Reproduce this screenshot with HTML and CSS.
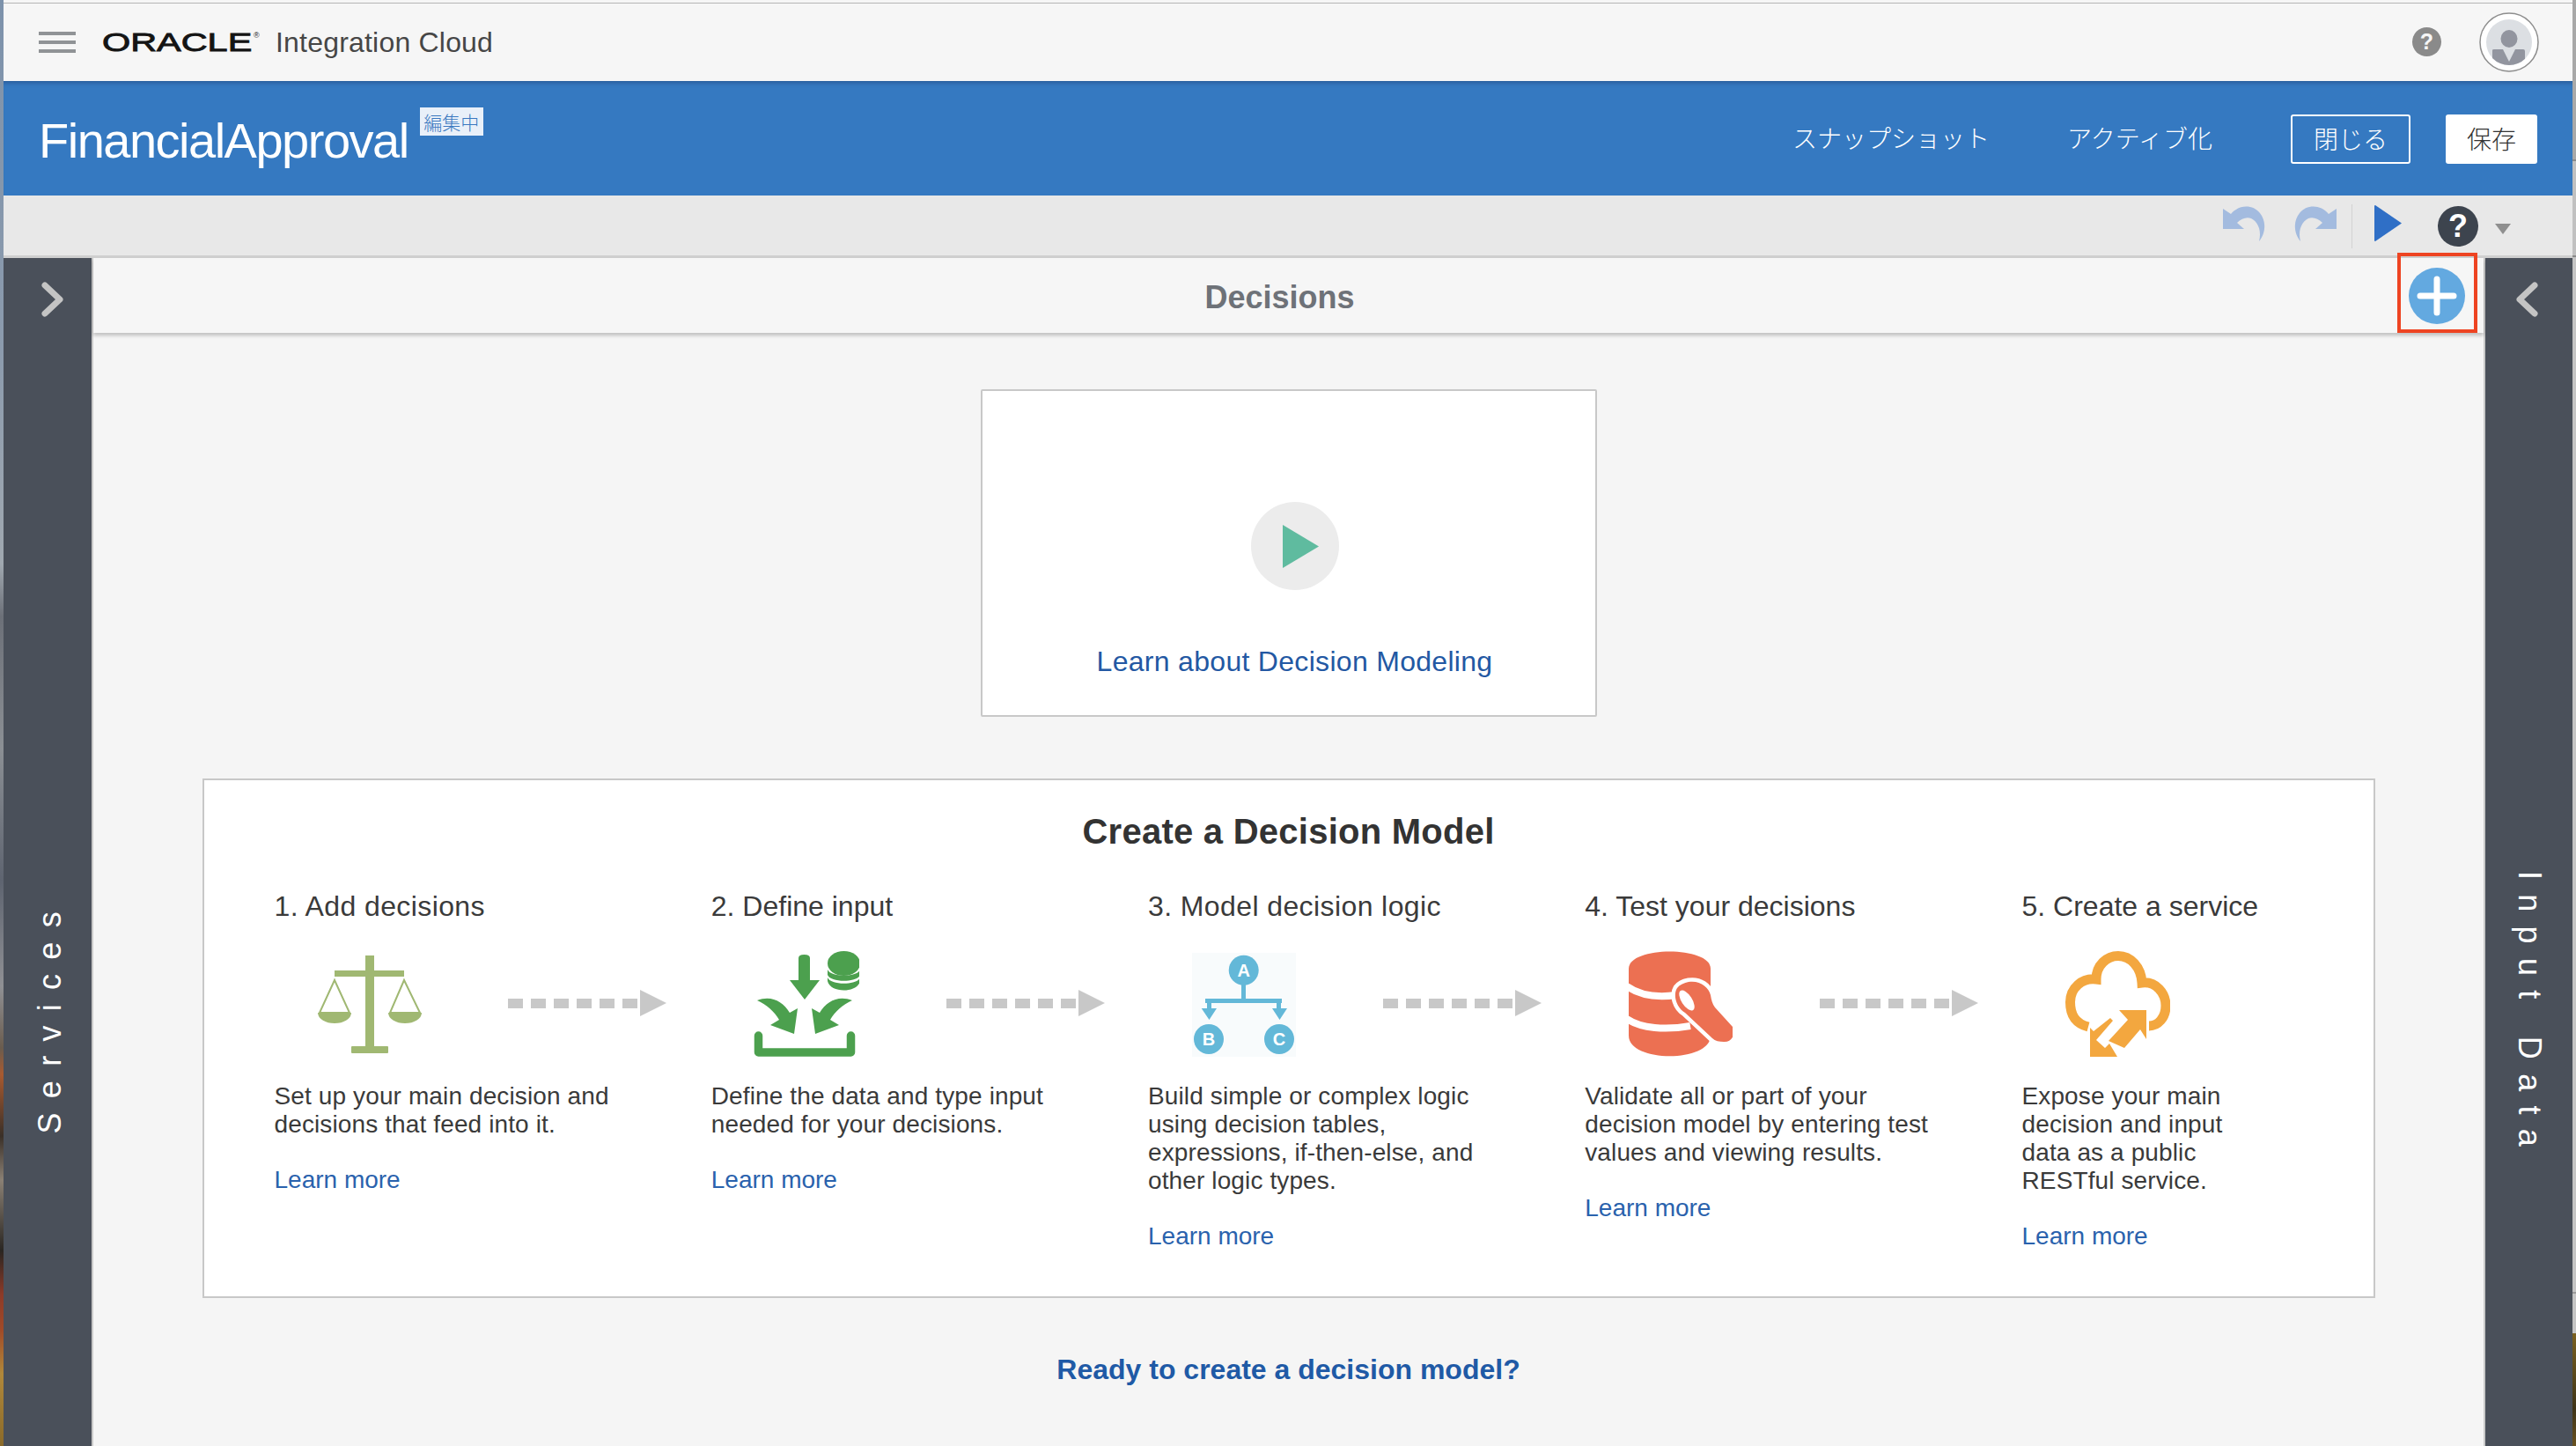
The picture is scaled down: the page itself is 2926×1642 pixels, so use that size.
FILE: index.html
```html
<!DOCTYPE html>
<html lang="en">
<head>
<meta charset="utf-8">
<title>FinancialApproval - Decisions</title>
<link rel="stylesheet" href="styles.css">
</head>
<body>
<div class="strip strip-left"></div>
<div class="app">
  <header class="topbar">
    <div class="burger"><i></i><i></i><i></i></div>
    <div class="logo"><span class="logo-word">ORACLE</span><sup class="logo-reg">®</sup></div>
    <div class="product">Integration Cloud</div>
    <div class="topbar-right">
      <span class="help-small">?</span>
      <svg class="avatar" viewBox="0 0 68 68">
        <defs><clipPath id="av"><circle cx="34" cy="34" r="26"/></clipPath></defs>
        <circle cx="34" cy="34" r="33" fill="#fff" stroke="#8e8e8e" stroke-width="1.5"/>
        <circle cx="34" cy="34" r="26" fill="#dcdfe3"/>
        <g clip-path="url(#av)">
          <ellipse cx="34" cy="30" rx="9.5" ry="10" fill="#92959f"/>
          <path d="M15 43 Q15 42 17 42 H27 L34 56 L41 42 H50 Q52 42 52 44 V64 H15 Z" fill="#92959f"/>
        </g>
      </svg>
    </div>
  </header>

  <section class="titlebar">
    <h1 class="app-name">FinancialApproval</h1>
    <span class="badge">編集中</span>
    <nav class="actions">
      <a class="action act-snap">スナップショット</a>
      <a class="action act-activate">アクティブ化</a>
      <button class="btn btn-outline">閉じる</button>
      <button class="btn btn-solid">保存</button>
    </nav>
  </section>

  <section class="toolbar">
    <svg class="tool-undo" viewBox="0 0 48 40"><path d="M0 3 L0 26 L24 26 L16 19 C21 14 27 12 32 14 C40 18 44 28 41 40 C48 32 50 18 42 8 C34 -2 18 -2 9 9 Z" fill="#a3bbdf"/></svg>
    <svg class="tool-redo" viewBox="0 0 48 40"><path d="M48 3 L48 26 L24 26 L32 19 C27 14 21 12 16 14 C8 18 4 28 7 40 C0 32 -2 18 6 8 C14 -2 30 -2 39 9 Z" fill="#a3bbdf"/></svg>
    <span class="tool-sep"></span>
    <svg class="tool-play" viewBox="0 0 31 41"><path d="M1 0 L31 20.5 L1 41 Q0 41 0 40 V1 Q0 0 1 0 Z" fill="#2f6fc6"/></svg>
    <span class="help-big">?</span>
    <span class="caret"></span>
  </section>

  <div class="workspace">
    <aside class="side side-left">
      <svg class="chev" viewBox="0 0 25 40"><path d="M4 4 L21 20 L4 36" fill="none" stroke="#c4c4c4" stroke-width="7" stroke-linecap="round" stroke-linejoin="round"/></svg>
      <div class="side-label label-services">Services</div>
    </aside>

    <main class="content">
      <div class="panel-head">
        <h2 class="panel-title">Decisions</h2>
        <div class="add-frame">
          <svg class="add-btn" viewBox="0 0 64 64"><circle cx="32" cy="32" r="32" fill="#63a9e0"/><path d="M32 13 V51 M13 32 H51" stroke="#fff" stroke-width="7" stroke-linecap="round"/></svg>
        </div>
      </div>

      <div class="video-card">
        <span class="video-play"><svg viewBox="0 0 41 49"><path d="M0 0 L41 24.5 L0 49 Z" fill="#5fbb9f"/></svg></span>
        <a class="video-link">Learn about Decision Modeling</a>
      </div>

      <div class="model-card">
        <h3 class="model-title">Create a Decision Model</h3>
        <div class="steps">

          <div class="step">
            <div class="step-title step-title-wide">1. Add decisions</div>
            <div class="step-visual">
              <svg class="step-icon" viewBox="0 0 120 120">
                <g fill="#a0b872">
                  <rect x="55" y="5" width="10" height="105"/>
                  <rect x="39" y="108" width="42" height="8" rx="1"/>
                  <rect x="20" y="22" width="79" height="7"/>
                  <path d="M1 70 H39 A19 12 0 0 1 1 70 Z"/>
                  <path d="M81 70 H119 A19 12 0 0 1 81 70 Z"/>
                </g>
                <path d="M20 33 L3 70 H37 Z M99 33 L83 70 H117 Z" fill="none" stroke="#a0b872" stroke-width="2"/>
              </svg>
              <div class="flow-arrow"><i></i><i></i><i></i><i></i><i></i><i></i><b></b></div>
            </div>
            <p class="step-text">Set up your main decision and decisions that feed into it.</p>
            <a class="step-link">Learn more</a>
          </div>

          <div class="step">
            <div class="step-title">2. Define input</div>
            <div class="step-visual">
              <svg class="step-icon" viewBox="0 0 120 120">
                <g fill="#4ca04e">
                  <path d="M51 8 Q51 4 57.500 4 Q64 4 64 8 V33 H75 L58 55 L41 33 H51 Z"/>
                  <ellipse cx="102.500" cy="14" rx="18.500" ry="14"/>
                  <path d="M84 20 C87 29 118 29 121 20 V26 C118 35 87 35 84 26 Z" transform="translate(0 1)"/>
                  <path d="M84 29 C87 38 118 38 121 29 V33 C118 47 87 47 84 33 Z" transform="translate(0 1)"/>
                  <path d="M4 56 C20 50 33 57 41 70 L50 65 L46 94 L19 84 L29 78 C24 69 15 61 4 56 Z"/>
                  <path d="M112 56 C96 50 83 57 75 70 L66 65 L70 94 L97 84 L87 78 C92 69 101 61 112 56 Z"/>
                </g>
                <path d="M5.500 96 V115 H110.500 V96" fill="none" stroke="#4ca04e" stroke-width="9.500" stroke-linecap="round" stroke-linejoin="round"/>
              </svg>
              <div class="flow-arrow"><i></i><i></i><i></i><i></i><i></i><i></i><b></b></div>
            </div>
            <p class="step-text">Define the data and type input needed for your decisions.</p>
            <a class="step-link">Learn more</a>
          </div>

          <div class="step">
            <div class="step-title step-title-wide">3. Model decision logic</div>
            <div class="step-visual">
              <svg class="step-icon" viewBox="0 0 120 120">
                <rect x="2" y="2" width="118" height="118" fill="#f8fbfc"/>
                <g fill="#63b8d8">
                  <ellipse cx="60.700" cy="21.700" rx="17" ry="17"/>
                  <circle cx="21" cy="100" r="17"/>
                  <circle cx="101" cy="100" r="17"/>
                  <rect x="58" y="36" width="5" height="20"/>
                  <rect x="17" y="54" width="87" height="5"/>
                  <rect x="19" y="54" width="5" height="14"/>
                  <rect x="98" y="54" width="5" height="14"/>
                  <path d="M12.700 65 H30 L21.500 78 Z M93 65 H110 L101.500 78 Z"/>
                </g>
                <g class="node-letter" fill="#fff" text-anchor="middle">
                  <text x="60.700" y="29">A</text>
                  <text x="21" y="107">B</text>
                  <text x="101" y="107">C</text>
                </g>
              </svg>
              <div class="flow-arrow"><i></i><i></i><i></i><i></i><i></i><i></i><b></b></div>
            </div>
            <p class="step-text">Build simple or complex logic using decision tables, expressions, if-then-else, and other logic types.</p>
            <a class="step-link">Learn more</a>
          </div>

          <div class="step">
            <div class="step-title">4. Test your decisions</div>
            <div class="step-visual">
              <svg class="step-icon" viewBox="0 0 120 120">
                <path d="M2 20 C2 -6 95 -6 95 20 V96 C95 127 2 127 2 96 Z" fill="#ec7052"/>
                <path d="M0 40 C14 50 34 53 56 50 M0 77 C16 88 44 90 72 85" fill="none" stroke="#fff" stroke-width="8"/>
                <path d="M70 35 C83 33 93 41 95 50 C96 56 97 60 100 64 L120 86 C125 94 118 104 110 103 C105 103 100 102 97 99 L66 70 C56 64 52 50 57 42 C60 38 65 36 70 35 Z" fill="#ec7052" stroke="#fff" stroke-width="9" paint-order="stroke"/>
                <ellipse cx="68" cy="56" rx="6" ry="13" transform="rotate(-33 68 56)" fill="#fff"/>
              </svg>
              <div class="flow-arrow"><i></i><i></i><i></i><i></i><i></i><i></i><b></b></div>
            </div>
            <p class="step-text">Validate all or part of your decision model by entering test values and viewing results.</p>
            <a class="step-link">Learn more</a>
          </div>

          <div class="step">
            <div class="step-title">5. Create a service</div>
            <div class="step-visual">
              <svg class="step-icon" viewBox="0 0 120 120">
                <path d="M27 86 C12 82 6.500 72 6.500 58 C6.500 42 20 30 36 32 C36 16 48 5.500 61 5.500 C75 5.500 87 18 88 36 C104 34 115 48 115 62 C115 76 106 85 96 85" fill="none" stroke="#f3a73f" stroke-width="11"/>
                <path d="M62 67 H93 V100 L86 89 L68 110 L50 102 L72 78 Z" fill="#f3a73f"/>
                <path d="M29 87 L33 91 L52 76 L55 79 L36 101 L46 110 L51 105 L60 120 H29 Z" fill="#f3a73f"/>
              </svg>
            </div>
            <p class="step-text step-text-narrow">Expose your main decision and input data as a public RESTful service.</p>
            <a class="step-link">Learn more</a>
          </div>

        </div>
      </div>

      <a class="ready-link">Ready to create a decision model?</a>
    </main>

    <aside class="side side-right">
      <svg class="chev" viewBox="0 0 25 40"><path d="M21 4 L4 20 L21 36" fill="none" stroke="#c4c4c4" stroke-width="7" stroke-linecap="round" stroke-linejoin="round"/></svg>
      <div class="side-label label-input">Input Data</div>
    </aside>
  </div>
</div>
<div class="strip strip-right"></div>
</body>
</html>
```

FILE: styles.css
```css
* { box-sizing: border-box; }
html, body { margin: 0; padding: 0; }
body {
  display: flex;
  width: 2926px;
  height: 1642px;
  overflow: hidden;
  background: #f5f5f5;
  font-family: "Liberation Sans", Arial, "Noto Sans CJK JP", sans-serif;
  color: #333;
}
.strip { width: 4px; flex: none; }
.strip-left {
  background: linear-gradient(180deg, #7d92ab 0, #8c9bad 400px, #a0a8b0 640px, #6c7078 700px, #8b8f94 850px, #5e6470 1000px, #8f9094 1120px, #6a5c4e 1190px, #a85a30 1220px, #3a3028 1290px, #8a8074 1340px, #2a2622 1420px, #8c3a28 1470px, #a04a28 1510px, #b0883a 1560px, #8a6a2a 1642px);
}
.strip-right {
  background: linear-gradient(180deg, #a8a8a8 0, #a8a8a8 181px, #8a8a8a 181px, #8a8a8a 183px, #c0c0c0 183px, #c0c0c0 290px, #8a8a8a 290px, #8a8a8a 292px, #c4c4c4 292px, #c4c4c4 1467px, #9a9a9a 1467px, #9a9a9a 1469px, #c4c4c4 1469px, #c4c4c4 1514px, #7a6020 1514px, #3f3418 1600px, #6a5220 1642px);
}
.app { flex: 1; min-width: 0; display: flex; flex-direction: column; }

/* top bar */
.topbar {
  flex: none;
  height: 92px;
  display: flex;
  align-items: center;
  padding: 3px 0 0 40px;
  background: linear-gradient(180deg, #f6f6f6 0, #f6f6f6 3px, #b5b5b5 3px, #b5b5b5 4px, #f6f6f6 4px);
}
.burger { width: 42px; display: flex; flex-direction: column; gap: 6px; }
.burger i { display: block; height: 4px; background: #909396; }
.logo { width: 181px; margin-left: 30px; position: relative; display: flex; align-items: center; height: 30px; }
.logo-word {
  display: block;
  font-size: 30px;
  line-height: 30px;
  font-weight: 400;
  color: #141414;
  -webkit-text-stroke: 0.9px #141414;
  transform: scaleX(1.38);
  transform-origin: left center;
}
.logo-reg { position: absolute; left: 172px; top: 2px; margin: 0; font-size: 9px; line-height: 10px; color: #222; }
.product { margin-left: 16px; font-size: 32px; line-height: 40px; letter-spacing: .2px; color: #464646; }
.topbar-right { margin-left: auto; display: flex; align-items: center; gap: 43px; padding-right: 38px; }
.help-small {
  width: 33px; height: 33px; border-radius: 50%;
  background: #8a8a8a; color: #f6f6f6;
  display: flex; align-items: center; justify-content: center;
  font-size: 25px; font-weight: 700;
}
.avatar { width: 68px; height: 68px; display: block; }

/* blue title */
.titlebar {
  flex: none;
  height: 130px;
  display: flex;
  align-items: flex-start;
  background: #3579c1;
  box-shadow: inset 0 6px 5px -4px rgba(30, 60, 110, .5);
  padding-left: 40px;
  position: relative;
}
.app-name {
  margin: 32px 0 0;
  font-size: 56px;
  line-height: 72px;
  font-weight: 400;
  letter-spacing: -1.5px;
  color: #fff;
}
.badge {
  margin: 30px 0 0 13px;
  width: 72px; height: 32px;
  background: #e9f0f9;
  color: #3a78c0;
  font-size: 21px;
  line-height: 32px;
  text-align: center;
  font-family: "Noto Sans CJK JP", sans-serif;
  font-weight: 300;
}
.actions {
  margin-left: auto;
  display: flex;
  align-items: center;
  height: 56px;
  margin-top: 38px;
  padding-right: 40px;
  font-family: "Noto Sans CJK JP", sans-serif;
  font-weight: 300;
  font-size: 28px;
  color: #fff;
}
.action { white-space: nowrap; position: relative; top: -2px; }
.act-activate { margin-left: 88px; }
.btn {
  height: 56px;
  border-radius: 3px;
  font: inherit;
  padding: 0 0 3px;
}
.btn-outline { width: 136px; margin-left: 89px; background: transparent; border: 2px solid #fff; color: #fff; }
.btn-solid { width: 104px; margin-left: 40px; background: #fff; border: 0; color: #333; }

/* tool bar */
.toolbar {
  flex: none;
  height: 71px;
  display: flex;
  align-items: flex-start;
  justify-content: flex-end;
  background: #e8e8e8;
  border-bottom: 3px solid #cfcfcf;
  padding-right: 70px;
  position: relative;
}
.tool-undo, .tool-redo { width: 48px; height: 40px; margin-top: 12px; display: block; }
.tool-redo { margin-left: 33px; }
.tool-sep { width: 1px; height: 50px; margin: 10px 0 0 17px; background: #d2d2d2; }
.tool-play { width: 31px; height: 41px; margin: 11px 0 0 25px; display: block; }
.help-big {
  width: 46px; height: 46px; margin: 12px 0 0 41px; border-radius: 50%;
  background: #3d444e; color: #fff;
  display: flex; align-items: center; justify-content: center;
  font-size: 36px; font-weight: 700;
}
.caret {
  width: 0; height: 0; margin: 32px 0 0 19px;
  border-left: 9px solid transparent;
  border-right: 9px solid transparent;
  border-top: 12px solid #8f8f8f;
}

/* workspace */
.workspace { flex: 1; min-height: 0; display: flex; }
.side {
  flex: none;
  width: 102px;
  background: #4a505a;
  display: flex;
  flex-direction: column;
  color: #fff;
}
.side-left { border-right: 2px solid #c9c9c9; }
.side-right { border-left: 2px solid #c9c9c9; width: 101px; }
.chev { width: 25px; height: 40px; margin-top: 27px; display: block; flex: none; }
.side-left .chev { margin-left: 43px; }
.side-right .chev { margin-left: 35px; }
.side-label {
  align-self: flex-start;
  font-size: 36px;
  line-height: 40px;
  letter-spacing: 16.3px;
  white-space: nowrap;
  writing-mode: vertical-rl;
}
.label-services { transform: rotate(180deg); margin: 659px 0 0 33px; }
.label-input { margin: 629px 0 0 30px; }

/* content */
.content { flex: 1; min-width: 0; display: flex; flex-direction: column; align-items: center; background: #f5f5f5; }
.panel-head {
  flex: none;
  width: 100%;
  height: 85px;
  position: relative;
  background: #f6f6f6;
  box-shadow: 0 3px 4px rgba(0, 0, 0, .22);
  display: flex;
  align-items: center;
  justify-content: center;
  padding: 5px 20px 0 0;
}
.panel-title { margin: 0; font-size: 36px; line-height: 44px; font-weight: 700; color: #6e7278; }
.add-frame {
  position: absolute;
  top: -6px; right: 7px;
  width: 91px; height: 91px;
  border: 4px solid #ee4422;
  display: flex;
  align-items: center;
  justify-content: center;
  padding: 7px 2px 0 0;
}
.add-btn { width: 64px; height: 64px; display: block; }

.video-card {
  flex: none;
  width: 700px;
  height: 372px;
  margin-top: 64px;
  padding-left: 14px;
  background: #fff;
  border: 2px solid #c8c8c8;
  border-radius: 2px;
  display: flex;
  flex-direction: column;
  align-items: center;
}
.video-play {
  width: 100px; height: 100px;
  margin-top: 126px;
  border-radius: 50%;
  background: #ececec;
  display: flex;
  align-items: center;
  justify-content: center;
  padding-left: 14px;
}
.video-play svg { width: 41px; height: 49px; display: block; }
.video-link { margin-top: 61px; font-size: 32px; line-height: 40px; letter-spacing: .3px; color: #2358a3; white-space: nowrap; }

.model-card {
  flex: none;
  width: 2468px;
  height: 590px;
  margin-top: 70px;
  padding: 34px 0 0 80px;
  background: #fff;
  border: 2px solid #c8c8c8;
}
.model-title { margin: 0 0 0 -80px; text-align: center; font-size: 40px; line-height: 48px; font-weight: 700; letter-spacing: .25px; color: #333; }
.steps { margin-top: 41px; display: grid; grid-template-columns: repeat(5, 496.25px); }
.step { min-width: 0; }
.step-title { font-size: 32px; line-height: 40px; color: #3a3a3a; white-space: nowrap; }
.step-title-wide { letter-spacing: .4px; }
.step-visual { margin-top: 31px; height: 120px; display: flex; align-items: center; }
.step-icon { width: 120px; height: 120px; margin-left: 48px; display: block; flex: none; }
.node-letter { font-size: 20px; font-weight: 700; font-family: "Liberation Sans", sans-serif; }
.flow-arrow { margin: 0 0 2px 97px; width: 180px; display: flex; align-items: center; }
.step:not(:first-child) .flow-arrow { margin-left: 99px; }
.flow-arrow i { display: block; width: 17px; height: 11px; background: #c8c8c8; margin-right: 9px; flex: none; }
.flow-arrow i:last-of-type { margin-right: 3px; }
.flow-arrow b {
  display: block; width: 0; height: 0; flex: none;
  border-top: 15px solid transparent;
  border-bottom: 15px solid transparent;
  border-left: 30px solid #c8c8c8;
}
.step-text { margin: 29px 0 0; width: 410px; font-size: 28px; line-height: 32px; letter-spacing: .12px; color: #3a3a3a; }
.step-text-narrow { width: 260px; }
.step-link { display: block; margin-top: 31px; font-size: 28px; line-height: 32px; color: #2a62ad; }

.ready-link { margin-top: 61px; font-size: 32px; line-height: 40px; font-weight: 700; color: #1f5aa6; white-space: nowrap; }
```
